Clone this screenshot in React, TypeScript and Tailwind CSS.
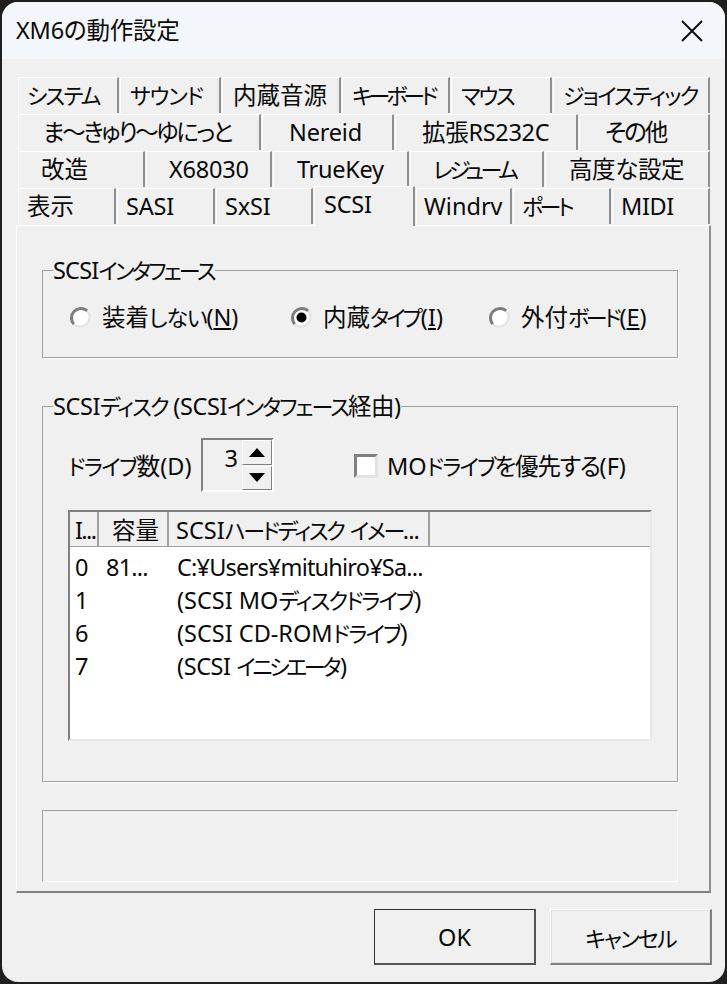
import React from 'react';

const tabRows = [
  [
    { label: 'システム', cls: 'w-[101px] pl-[8px] pb-[1px] text-[22px] tracking-[-1.9px]' },
    { label: 'サウンド', cls: 'w-[101px] pl-[9px] pb-[1px] text-[22px] tracking-[-1.2px]' },
    { label: '内蔵音源', cls: 'w-[119px] pl-[10px]' },
    { label: 'キーボード', cls: 'w-[108px] pl-[9px] pb-[1px] text-[22px] tracking-[-4px]' },
    { label: 'マウス', cls: 'w-[101px] pl-[9px] pb-[1px] text-[22px] tracking-[-2.3px]' },
    { label: 'ジョイスティック', cls: 'w-[157px] pl-[9px] pb-[1px] text-[22px] tracking-[-1.8px]' },
  ],
  [
    { label: 'ま〜きゅり〜ゆにっと', cls: 'w-[243px] pl-[24px] tracking-[-2.5px]' },
    { label: 'Nereid', cls: 'w-[132px] pl-[26px] tracking-[-0.2px]' },
    { label: '拡張RS232C', cls: 'w-[183px] pl-[26px] tracking-[-0.3px]' },
    { label: 'その他', cls: 'w-[131px] pl-[25px] tracking-[-2px]' },
  ],
  [
    { label: '改造', cls: 'w-[127px] pl-[22px]' },
    { label: 'X68030', cls: 'w-[126px] pl-[22px] tracking-[-0.2px]' },
    { label: 'TrueKey', cls: 'w-[136px] pl-[23px] tracking-[-0.3px]' },
    { label: 'レジューム', cls: 'w-[134px] pl-[22px] pb-[2px] text-[22px] tracking-[-3.4px]' },
    { label: '高度な設定', cls: 'w-[165px] pl-[23px] tracking-[-0.4px]' },
  ],
];

const lastRow = [
  { label: '表示', cls: 'w-[98px] pl-[8px]' },
  { label: 'SASI', cls: 'w-[98px] pl-[8px] tracking-[-0.2px]' },
  { label: 'SxSI', cls: 'w-[97px] pl-[8px] tracking-[-0.2px]' },
  { label: 'SCSI', cls: 'w-[101px] pl-[9px] pb-[4px] tracking-[-0.2px]', active: true },
  { label: 'Windrv', cls: 'w-[96px] pl-[7px]' },
  { label: 'ポート', cls: 'w-[98px] pl-[8px] pb-[2px] text-[22px] tracking-[-3.6px]' },
  { label: 'MIDI', cls: 'w-[98px] pl-[8px] tracking-[-0.4px]' },
];

const Tab = ({ label, cls, active }: { label: string; cls: string; active?: boolean }) => (
  <div
    className={
      active
        ? `${cls} h-[40px] -mt-[2px] mr-[1px] z-10 flex items-center whitespace-nowrap border-t border-l border-white border-r-2 border-r-[#8f8f8f] bg-[#f0f0f0] -mb-[1px]`
        : `${cls} h-[36px] mr-[1px] flex items-center whitespace-nowrap border-t border-l border-white border-r-2 border-r-[#8f8f8f] bg-[#f0f0f0]`
    }
  >
    {label}
  </div>
);

const Radio = ({ checked }: { checked?: boolean }) => (
  <svg width="21" height="21" viewBox="0 0 21 21" className="shrink-0 -mt-[2px]">
    <circle cx="10.5" cy="10.5" r="9.5" fill="#ffffff" />
    <path d="M3.8 17.2A9.5 9.5 0 0 1 17.2 3.8" fill="none" stroke="#7d7d7d" strokeWidth="3" />
    <path d="M3.8 17.2A9.5 9.5 0 0 0 17.2 3.8" fill="none" stroke="#e3e3e3" strokeWidth="2" />
    {checked && <circle cx="10.5" cy="10.5" r="5" fill="#000000" />}
  </svg>
);

const Hot = ({ children }: { children: string }) => (
  <span className="underline underline-offset-2">{children}</span>
);

const Arrow = ({ up }: { up?: boolean }) => (
  <svg width="16" height="9" viewBox="0 0 16 9">
    <path d={up ? 'M8 0L16 9H0Z' : 'M0 0H16L8 9Z'} fill="#000000" />
  </svg>
);

const App = () => {
  return (
    <div className="w-[727px] h-[984px] bg-[#1f1f1f] p-[2px] text-[23.5px] leading-none text-[#0a0a0a] font-['Noto_Sans','Noto_Sans_CJK_JP',sans-serif] [font-feature-settings:'palt']">
      <div className="h-full rounded-[16px] overflow-hidden bg-[#f0f0f0] flex flex-col">
        {/* Title bar */}
        <div className="h-[57px] shrink-0 bg-[#f3f6fa] flex items-center justify-between pl-[14px] pr-[22px]">
          <span className="tracking-[-0.2px]">XM6の動作設定</span>
          <svg width="22" height="22" viewBox="0 0 22 22">
            <path d="M1 1L21 21M21 1L1 21" stroke="#111111" strokeWidth="2" fill="none" />
          </svg>
        </div>

        {/* Tabs */}
        <div className="pl-[16px] pt-[18px] flex flex-col gap-[1px]">
          {tabRows.map((row, i) => (
            <div key={i} className="flex">
              {row.map((t) => (
                <Tab key={t.label} label={t.label} cls={t.cls} />
              ))}
            </div>
          ))}
          <div className="flex relative">
            {lastRow.map((t) => (
              <Tab key={t.label} label={t.label} cls={t.cls} active={t.active} />
            ))}
          </div>
        </div>

        {/* Tab page */}
        <div className="ml-[14px] w-[695px] h-[668px] border-t border-l border-white border-r-2 border-b-2 border-r-[#8f8f8f] border-b-[#808080] pl-[25px] pt-[44px]">
          {/* Interface group */}
          <div className="w-[636px] h-[88px] border border-[#a0a0a0] shadow-[1px_1px_0_#ffffff] px-[10px]">
            <div className="-mt-[13px] bg-[#f0f0f0] w-fit h-[26px] pr-[1px] flex items-center whitespace-nowrap tracking-[-0.8px]">
              <span>SCSI<span className="text-[22px] tracking-[-2.8px]">インタフェース</span></span>
            </div>
            <div className="flex items-center mt-[21px] h-[26px] pl-[17px] whitespace-nowrap">
              <div className="flex items-center gap-[11px] w-[221px]">
                <Radio />
                <span>装着<span className="text-[22px] tracking-[-1.2px]">しない</span>(<Hot>N</Hot>)</span>
              </div>
              <div className="flex items-center gap-[11px] w-[198px]">
                <Radio checked />
                <span>内蔵<span className="text-[22px] tracking-[-3px] mr-[1px]">タイプ</span>(<Hot>I</Hot>)</span>
              </div>
              <div className="flex items-center gap-[11px]">
                <Radio />
                <span>外付<span className="text-[22px] tracking-[-3.3px] mr-[1px]">ボード</span>(<Hot>E</Hot>)</span>
              </div>
            </div>
          </div>

          {/* Disk group */}
          <div className="mt-[48px] w-[636px] h-[376px] border border-[#a0a0a0] shadow-[1px_1px_0_#ffffff] pl-[10px]">
            <div className="-mt-[13px] bg-[#f0f0f0] w-fit h-[26px] flex items-center whitespace-nowrap tracking-[-0.4px]">
              <span>SCSI<span className="text-[22px] tracking-[-2px]">ディスク</span> (SCSI<span className="text-[22px] tracking-[-2px]">インタフェース</span>経由)</span>
            </div>
            <div className="flex items-center mt-[18px] ml-[15px] h-[54px] whitespace-nowrap">
              <span className="w-[133px] mt-[3px]"><span className="text-[22px] tracking-[-1.6px]">ドライブ</span>数(D)</span>
              <div className="w-[73px] h-[54px] border-2 border-[#808080] border-r-white border-b-white flex">
                <div className="w-[39px] text-right pr-[4px] pt-[7px]">3</div>
                <div className="flex-1 flex flex-col gap-[1px]">
                  <div className="h-[25px] flex items-center justify-center bg-[#f0f0f0] border-b border-r border-[#808080] border-t border-t-white border-l border-l-white">
                    <Arrow up />
                  </div>
                  <div className="h-[25px] flex items-center justify-center bg-[#f0f0f0] border-b border-r border-[#808080] border-t border-t-white border-l border-l-white">
                    <Arrow />
                  </div>
                </div>
              </div>
              <div className="ml-[80px] mt-[2px] w-[24px] h-[24px] bg-white border-[3px] border-[#808080] border-r-[#e3e3e3] border-b-[#e3e3e3]" />
              <span className="ml-[9px] mt-[3px]">MO<span className="text-[22px] tracking-[-1.8px]">ドライブ</span><span className="tracking-[-1.2px]">を優先する</span>(F)</span>
            </div>

            {/* Disk list */}
            <div className="mt-[18px] ml-[15px] w-[584px] h-[231px] bg-white border-2 border-[#808080] border-r-[#e8e8e8] border-b-[#e8e8e8] flex flex-col whitespace-nowrap">
              <div className="h-[35px] shrink-0 flex bg-[#f0f0f0] border-b border-[#a0a0a0]">
                <div className="w-[29px] pl-[5px] pt-[4px] flex items-center border-r-2 border-[#a0a0a0] tracking-[-1.6px]">I...</div>
                <div className="w-[70px] pl-[13px] pt-[4px] flex items-center border-r-2 border-[#a0a0a0]">容量</div>
                <div className="w-[261px] pl-[7px] pt-[4px] flex items-center border-r-2 border-[#a0a0a0]">
                  <span>SCSI<span className="text-[22px] tracking-[-2.4px]">ハードディスク</span> <span className="text-[22px] tracking-[-2.4px]">イメー</span><span className="tracking-[-1px]">...</span></span>
                </div>
                <div className="flex-1" />
              </div>
              <div className="pt-[4px] flex flex-col">
                <div className="h-[33px] flex items-center">
                  <span className="w-[36px] pl-[5px]">0</span>
                  <span className="w-[71px] tracking-[-0.8px]">81...</span>
                  <span className="tracking-[-0.8px]">C:¥Users¥mituhiro¥Sa...</span>
                </div>
                <div className="h-[33px] flex items-center">
                  <span className="w-[36px] pl-[5px]">1</span>
                  <span className="w-[71px]" />
                  <span>(SCSI MO<span className="text-[22px] tracking-[-2px] mr-[1px]">ディスクドライブ</span>)</span>
                </div>
                <div className="h-[33px] flex items-center">
                  <span className="w-[36px] pl-[5px]">6</span>
                  <span className="w-[71px]" />
                  <span>(SCSI CD-ROM<span className="text-[22px] tracking-[-1.8px]">ドライブ</span>)</span>
                </div>
                <div className="h-[33px] flex items-center">
                  <span className="w-[36px] pl-[5px]">7</span>
                  <span className="w-[71px]" />
                  <span className="tracking-[-0.4px]">(SCSI <span className="text-[22px] tracking-[-3.4px] mr-[2px]">イニシエータ</span>)</span>
                </div>
              </div>
            </div>
          </div>

          {/* Status box */}
          <div className="mt-[28px] w-[636px] h-[72px] border border-[#a0a0a0] border-r-white border-b-white" />
        </div>

        {/* Buttons */}
        <div className="flex justify-end gap-[14px] mt-[16px] pr-[13px]">
          <button className="w-[162px] h-[56px] pt-[3px] bg-[#f0f0f0] border border-[#333333] border-r-2 border-b-2 border-r-[#555555] border-b-[#555555]">
            OK
          </button>
          <button className="w-[162px] h-[56px] pt-[2px] bg-[#f0f0f0] border border-white border-r-2 border-b-2 border-r-[#808080] border-b-[#808080] shadow-[inset_0_0_0_1px_#e0e0e0] text-[22px] tracking-[-1.8px]">
            キャンセル
          </button>
        </div>
      </div>
    </div>
  );
};

export default App;
